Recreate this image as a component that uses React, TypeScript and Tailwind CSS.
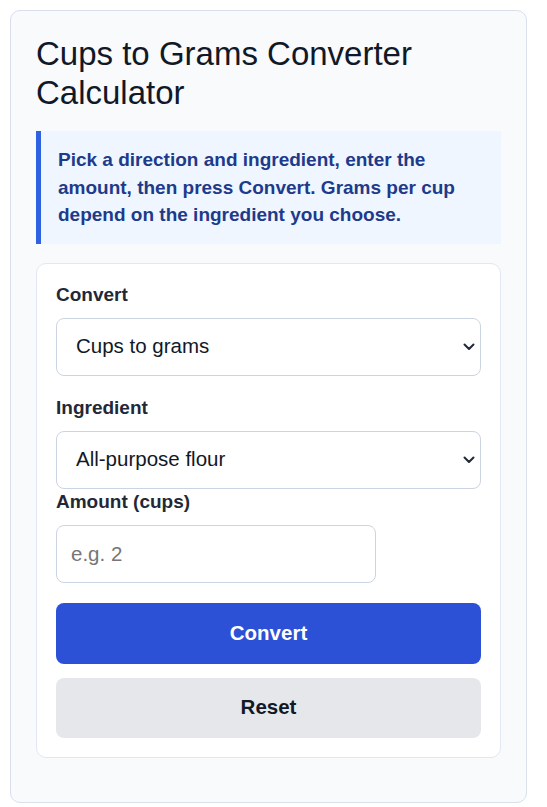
import React, { useState } from "react"

const DIRECTIONS = [
	{ value: "c2g", label: "Cups to grams" },
	{ value: "g2c", label: "Grams to cups" },
]

const INGREDIENTS = [
	{ value: "flour", label: "All-purpose flour", gramsPerCup: 120 },
	{ value: "sugar", label: "Granulated sugar", gramsPerCup: 200 },
	{ value: "brown", label: "Brown sugar (packed)", gramsPerCup: 220 },
	{ value: "butter", label: "Butter", gramsPerCup: 227 },
	{ value: "rice", label: "Rice (uncooked)", gramsPerCup: 185 },
]

function Chevron() {
	return (
		<svg
			className="pointer-events-none absolute right-[6px] top-1/2 -translate-y-1/2"
			width="12"
			height="8"
			viewBox="0 0 12 8"
			fill="none"
		>
			<path d="M1.5 1.5 6 6l4.5-4.5" stroke="#1f2937" strokeWidth="2" strokeLinecap="round" strokeLinejoin="round" />
		</svg>
	)
}

export default function App() {
	const [direction, setDirection] = useState("c2g")
	const [ingredient, setIngredient] = useState("flour")
	const [amount, setAmount] = useState("")

	const unit = direction === "c2g" ? "cups" : "grams"

	function reset() {
		setDirection("c2g")
		setIngredient("flour")
		setAmount("")
	}

	return (
		<div className="min-h-screen bg-white pt-[10px] pl-[10px] font-['Liberation_Sans',Arial,sans-serif]">
			<div className="w-[517px] rounded-[10px] border border-[#d9e0ea] bg-[#f8fafc] px-[25px] pt-[24px] pb-[24px]">
				<h1 className="mb-[19px] text-[33px] font-normal leading-[38.5px] text-[#111827]">
					Cups to Grams Converter Calculator
				</h1>

				<div className="border-l-[5px] border-[#2f62e0] bg-[#eff6ff] py-[15px] pl-[17px] pr-4">
					<p className="text-[19px] font-bold leading-[27.5px] text-[#1e3a8a]">
						Pick a direction and ingredient, enter the amount, then press Convert. Grams per cup depend on the ingredient you choose.
					</p>
				</div>

				<form
					className="mt-[19px] mb-[20px] rounded-[10px] border border-[#e2e8f0] bg-white p-[19px]"
					onSubmit={(e) => e.preventDefault()}
				>
					<div className="mb-[20px]">
						<label className="mb-3 block text-[19px] font-bold leading-[23px] text-[#1f2937]">Convert</label>
						<div className="relative">
							<select
								value={direction}
								onChange={(e) => setDirection(e.target.value)}
								className="h-[58px] w-full appearance-none rounded-[8px] border border-[#cbd5e1] bg-white pl-[19px] text-[20.5px] text-[#111827] outline-none"
							>
								{DIRECTIONS.map((d) => (
									<option key={d.value} value={d.value}>{d.label}</option>
								))}
							</select>
							<Chevron />
						</div>
					</div>

					<div>
						<label className="mb-3 block text-[19px] font-bold leading-[23px] text-[#1f2937]">Ingredient</label>
						<div className="relative">
							<select
								value={ingredient}
								onChange={(e) => setIngredient(e.target.value)}
								className="h-[58px] w-full appearance-none rounded-[8px] border border-[#cbd5e1] bg-white pl-[19px] text-[20.5px] text-[#111827] outline-none"
							>
								{INGREDIENTS.map((i) => (
									<option key={i.value} value={i.value}>{i.label}</option>
								))}
							</select>
							<Chevron />
						</div>
					</div>

					<label className="mb-3 mt-[1px] block text-[19px] font-bold leading-[23px] text-[#1f2937]">Amount ({unit})</label>
					<input
						type="number"
						value={amount}
						onChange={(e) => setAmount(e.target.value)}
						placeholder="e.g. 2"
						className="h-[58px] w-[320px] rounded-[8px] border border-[#cbd5e1] bg-white px-[14px] text-[20.5px] text-[#111827] outline-none placeholder:text-[#767676]"
					/>

					<button
						type="submit"
						className="mt-[20px] block h-[61px] w-full rounded-[8px] bg-[#2c50d6] text-[20.5px] font-bold text-white"
					>
						Convert
					</button>
					<button
						type="button"
						onClick={reset}
						className="mt-[14px] block h-[60px] w-full rounded-[8px] bg-[#e5e7eb] text-[20.5px] font-bold text-[#111827]"
					>
						Reset
					</button>
				</form>
			</div>
		</div>
	)
}
